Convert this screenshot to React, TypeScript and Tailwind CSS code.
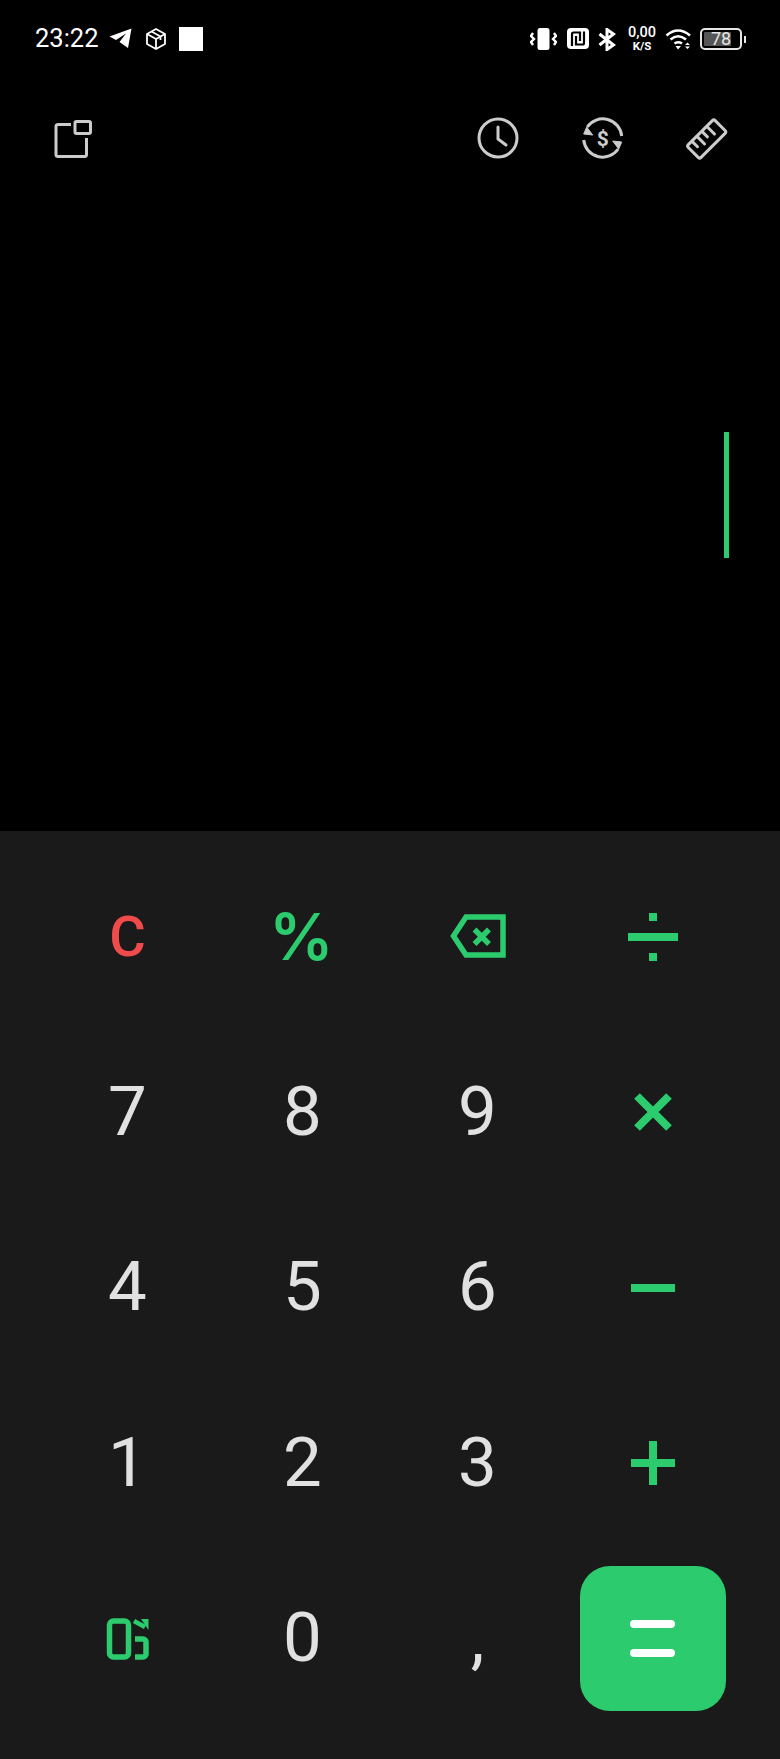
const Green = "#2bcb6e";

function StatusLeft() {
  return (
    <div className="flex items-center">
      <span className="text-[25.5px] leading-none text-white w-[74px]">23:22</span>
      <svg width="23" height="22" viewBox="0 0 23 22" className="text-white">
        <path d="M0.5 8.5 L22.5 0.5 L19 20 L10.5 14 L17 5.5 L7 12 Z" fill="currentColor" />
      </svg>
      <svg width="22" height="24" viewBox="0 0 22 24" fill="none" stroke="white" strokeWidth="1.8" strokeLinejoin="round" className="ml-[13px]">
        <path d="M11 2 L20 7 V17 L11 22 L2 17 V7 Z" />
        <path d="M2 7 L11 12 L20 7 M11 12 V22 M6.5 4.5 L15.5 9.5 V13" />
      </svg>
      <div className="w-[24px] h-[24px] bg-white ml-[12px]" />
    </div>
  );
}

function StatusRight() {
  return (
    <div className="flex items-center">
      <svg width="27" height="24" viewBox="0 0 27 24" fill="none" stroke="white" strokeWidth="2.4">
        <rect x="7.5" y="1" width="12" height="22" rx="2.5" fill="white" stroke="none" />
        <path d="M3 6 L1 9 L4 12 L1 15 L3 18" />
        <path d="M24 6 L26 9 L23 12 L26 15 L24 18" />
      </svg>
      <svg width="22" height="22" viewBox="0 0 22 22" className="ml-[10px]">
        <rect x="0" y="0" width="22" height="21" rx="4" fill="white" />
        <path d="M5 18 V6 a1.5 1.5 0 0 1 1.5 -1.5 H13 V13" fill="none" stroke="black" strokeWidth="2.2" />
        <path d="M17 3.5 V15 a1.5 1.5 0 0 1 -1.5 1.5 H9 V8" fill="none" stroke="black" strokeWidth="2.2" />
      </svg>
      <svg width="18" height="23" viewBox="0 0 18 23" fill="none" stroke="white" strokeWidth="3" className="ml-[9px]">
        <path d="M1.5 6 L15.5 17 L9 21.5 V1.5 L15.5 6 L1.5 17" />
      </svg>
      <div className="flex flex-col items-center text-white w-[30px] ml-[11px] font-medium">
        <span className="text-[14.5px] leading-[14px]">0,00</span>
        <span className="text-[11.5px] leading-[12px] font-bold">K/S</span>
      </div>
      <svg width="27" height="22" viewBox="0 0 27 22" fill="none" stroke="white" strokeWidth="2.6" className="ml-[8px]">
        <path d="M1.5 7.5 Q13 -2.5 25 7.5" />
        <path d="M5.5 11.5 Q13 5 21 11.5" />
        <path d="M9.5 15.5 Q13 13 17 15.5" />
        <path d="M10.5 18 L16 18 L13 21.5 Z" fill="white" stroke="none" />
        <path d="M20 17 L22.5 14.5 L25 17 Z M20 18.5 L25 18.5 L22.5 21 Z" fill="white" stroke="none" />
      </svg>
      <div className="flex items-center ml-[8px]">
        <div className="relative w-[42px] h-[22px] rounded-[5px] border-2 border-[#e6e6e6] p-[2px]">
          <div className="h-full w-[78%] bg-[#555555] rounded-[1px]" />
          <span className="absolute inset-0 flex items-center justify-center text-[18px] leading-none text-[#e6e6e6]">78</span>
        </div>
        <div className="w-[2px] h-[7px] bg-[#e6e6e6] ml-[2px]" />
      </div>
    </div>
  );
}

function Toolbar() {
  return (
    <div className="flex justify-between pl-[49px] pr-[50px] mt-[44px] text-[#cccccc]">
      <svg width="48" height="48" viewBox="0 0 48 48" fill="none" stroke="currentColor" strokeWidth="3">
        <path d="M22 10.5 H9 a2 2 0 0 0 -2 2 V40.5 a2 2 0 0 0 2 2 H35.5 a2 2 0 0 0 2 -2 V24" />
        <rect x="26" y="7.5" width="15.5" height="12" rx="1.5" />
      </svg>
      <div className="flex gap-[56px]">
        <svg width="48" height="48" viewBox="0 0 48 48" fill="none" stroke="currentColor" strokeWidth="3" strokeLinejoin="round" strokeLinecap="round">
          <circle cx="24" cy="24" r="19" />
          <path d="M24 13 V25 L32 31" />
        </svg>
        <svg width="48" height="48" viewBox="0 0 48 48" fill="none" stroke="currentColor" strokeWidth="3">
          <g transform="translate(0.7 0)">
            <path d="M43 22 A19 19 0 0 0 8.5 13" />
            <path d="M5 26 A19 19 0 0 0 39.5 35" />
            <path d="M5 20 L14 21 L8 13 Z" fill="currentColor" strokeWidth="1" />
            <path d="M43 28 L34 27 L40 35 Z" fill="currentColor" strokeWidth="1" />
            <text x="24" y="31.5" textAnchor="middle" fontSize="21" fontWeight="700" fill="currentColor" stroke="none" fontFamily="Roboto, sans-serif">$</text>
          </g>
        </svg>
        <svg width="48" height="48" viewBox="0 0 48 48" fill="none" stroke="currentColor" strokeWidth="3" strokeLinecap="round">
          <g transform="translate(0.7 1) rotate(-45 24 24)">
            <rect x="5" y="15" width="38" height="18" rx="2" />
            <path d="M12 16 V23 M19 16 V26 M26 16 V23 M33 16 V26" />
          </g>
        </svg>
      </div>
    </div>
  );
}

function Key({ children, className = "" }: { children: React.ReactNode; className?: string }) {
  return <button className={"flex items-center justify-center leading-none " + className}>{children}</button>;
}

const digit = "text-[69px] text-[#e1e1e1] pb-[2px]";

export default function App() {
  return (
    <div className="w-[780px] h-[1759px] bg-black flex flex-col font-['Roboto',sans-serif]">
      <div className="h-[831px] flex flex-col">
        <div className="h-[70px] flex items-center justify-between pt-[8px] pl-[35px] pr-[34px]">
          <StatusLeft />
          <StatusRight />
        </div>
        <Toolbar />
        <div className="flex justify-end pr-[51px] mt-[270px]">
          <div className="w-[5px] h-[126px] bg-[#2bcb6e]" />
        </div>
      </div>
      <div className="flex-1 bg-[#1a1a1a] pt-[18px] px-[40px]">
        <div className="grid grid-cols-4 auto-rows-[175.5px]">
          <Key className="text-[56px] font-medium text-[#ef4b4b]">C</Key>
          <Key className="text-[64px] font-semibold font-['Inter',sans-serif] text-[#2bcb6e] pr-[2px]">%</Key>
          <Key>
            <svg width="60" height="48" viewBox="0 0 60 48" fill="none" stroke={Green} strokeWidth="5.5">
              <path d="M55 4 H18 L5.5 23 L18 42 H55 Z" />
              <path d="M26.5 16.5 L41 31 M41 16.5 L26.5 31" />
            </svg>
          </Key>
          <Key>
            <svg width="50" height="48" viewBox="0 0 50 48" fill={Green}>
              <rect x="0" y="20" width="50" height="8" />
              <rect x="21" y="0" width="8" height="8" />
              <rect x="21" y="40" width="8" height="8" />
            </svg>
          </Key>

          <Key className={digit}>7</Key>
          <Key className={digit}>8</Key>
          <Key className={digit}>9</Key>
          <Key>
            <svg width="40" height="40" viewBox="0 0 40 40" stroke={Green} strokeWidth="8">
              <path d="M4 4 L36 36 M36 4 L4 36" />
            </svg>
          </Key>

          <Key className={digit}>4</Key>
          <Key className={digit}>5</Key>
          <Key className={digit}>6</Key>
          <Key>
            <svg width="44" height="8" viewBox="0 0 44 8" fill={Green}>
              <rect width="44" height="8" />
            </svg>
          </Key>

          <Key className={digit}>1</Key>
          <Key className={digit}>2</Key>
          <Key className={digit}>3</Key>
          <Key>
            <svg width="44" height="44" viewBox="0 0 44 44" fill={Green}>
              <rect y="18" width="44" height="8" />
              <rect x="18" width="8" height="44" />
            </svg>
          </Key>

          <Key>
            <svg width="48" height="48" viewBox="0 0 48 48" fill="none" stroke={Green} strokeWidth="5.5">
              <rect x="5.5" y="6" width="19" height="36" rx="4" />
              <path d="M31 42 H39 a3 3 0 0 0 3 -3 V27 a3 3 0 0 0 -3 -3 H31" />
              <path d="M30 6 L41 12" strokeWidth="4.5" />
              <path d="M37 4 H44.5 V15 Z" fill={Green} stroke="none" />
            </svg>
          </Key>
          <Key className={digit}>0</Key>
          <Key className={digit}>,</Key>
          <Key>
            <div className="w-[146px] h-[145px] rounded-[30px] bg-[#2bcb6e] flex flex-col items-center justify-center gap-[21px]">
              <div className="w-[45px] h-[8px] rounded-full bg-white" />
              <div className="w-[45px] h-[8px] rounded-full bg-white" />
            </div>
          </Key>
        </div>
      </div>
    </div>
  );
}
